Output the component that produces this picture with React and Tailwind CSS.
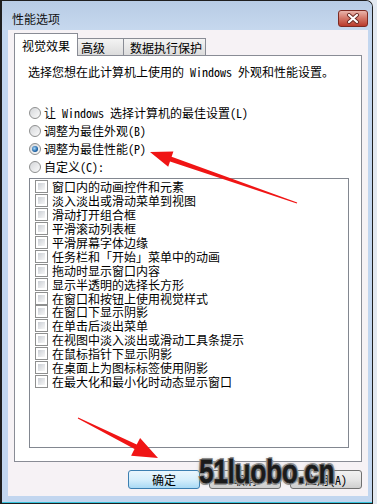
import React from "react";

const options = [
  "窗口内的动画控件和元素",
  "淡入淡出或滑动菜单到视图",
  "滑动打开组合框",
  "平滑滚动列表框",
  "平滑屏幕字体边缘",
  "任务栏和「开始」菜单中的动画",
  "拖动时显示窗口内容",
  "显示半透明的选择长方形",
  "在窗口和按钮上使用视觉样式",
  "在窗口下显示阴影",
  "在单击后淡出菜单",
  "在视图中淡入淡出或滑动工具条提示",
  "在鼠标指针下显示阴影",
  "在桌面上为图标标签使用阴影",
  "在最大化和最小化时动态显示窗口",
];

const radios = [
  { label: "让 Windows 选择计算机的最佳设置(L)" },
  { label: "调整为最佳外观(B)" },
  { label: "调整为最佳性能(P)", checked: true },
  { label: "自定义(C):" },
];

const Radio = ({ label, checked }) => (
  <div className="flex items-center h-[18px] gap-[3px]">
    <div className="ml-[1px] w-[12px] h-[12px] rounded-full border border-[#8e8f8f] bg-linear-to-br from-[#d4d6d9] to-[#fbfbfb] flex items-center justify-center">
      {checked && (
        <div className="w-[6px] h-[6px] rounded-full bg-[radial-gradient(circle_at_40%_40%,#a9d8f8,#1d63a6_60%,#0b3a6e)]" />
      )}
    </div>
    <span className="leading-[14px]">{label}</span>
  </div>
);

const Checkbox = ({ label }) => (
  <div className="flex items-center h-[13.9px] pl-[5px] gap-[4px]">
    <div className="w-[13px] h-[13px] shrink-0 border border-[#8e8f8f] bg-white p-[2px]">
      <div className="w-full h-full bg-linear-to-br from-[#cbcfd5] to-[#f7f7f7]" />
    </div>
    <span className="leading-[13px] whitespace-nowrap">{label}</span>
  </div>
);

const Btn = ({ children, primary }) => (
  <div
    className={
      primary
        ? "w-[72px] h-[19px] rounded-[3px] border border-[#3c7fb1] bg-linear-to-b from-[#eaf6fd] via-[#d6effc] to-[#a9daf5] flex items-center justify-center leading-[14px]"
        : "w-[72px] h-[19px] rounded-[3px] border border-[#707070] bg-linear-to-b from-[#f2f2f2] via-[#e6e6e6] to-[#cfcfcf] flex items-center justify-center leading-[14px]"
    }
  >
    {children}
  </div>
);

const Arrows = () => (
  <svg className="absolute left-0 top-0 pointer-events-none" width="377" height="504" viewBox="0 0 377 504">
    <polygon
      fill="#f01515"
      points="150,152 173.4,151.6 171.6,156.8 297.2,202.5 296.8,203.5 170,161.6 168.2,166.8"
    />
    <polygon
      fill="#f01515"
      points="158,458 140.1,437.9 136.7,444.6 78.2,417.6 77.8,418.4 134.5,449 131.1,455.7"
    />
  </svg>
);

export default function App() {
  return (
    <div className="relative w-[377px] h-[504px] overflow-hidden bg-[#e3e9f1] text-[12px] text-black font-['Noto_Sans_Mono_CJK_SC','Noto_Sans_CJK_SC',sans-serif]">
      <div className="w-[373px] h-[504px] flex flex-col bg-[#c2d6ef] border-l-2 border-t border-r border-[#1f1f1f] rounded-tr-[7px]">
        {/* title bar */}
        <div className="h-[29px] flex items-start justify-between pl-[10px] pr-[4px] bg-linear-to-b from-[#b8cce5] to-[#c6d8ee] rounded-tr-[6px]">
          <span className="mt-[11px] leading-[14px] text-[#111]">性能选项</span>
          <div className="mt-[9px] w-[30px] h-[17px] rounded-[3px] border border-[#7d2a22] bg-linear-to-b from-[#e8b4ac] via-[#d27466] to-[#b9392b] flex items-center justify-center">
            <svg width="14" height="11" viewBox="0 0 14 11">
              <path d="M3 2 L11 9 M11 2 L3 9" stroke="#6b2a24" strokeWidth="4" strokeLinecap="round" />
              <path d="M3 2 L11 9 M11 2 L3 9" stroke="#ffffff" strokeWidth="2.2" strokeLinecap="round" />
            </svg>
          </div>
        </div>

        {/* client area */}
        <div className="h-[466px] ml-[6px] mr-[4px] bg-[#f6f2f5] pl-[6px] flex flex-col">
          {/* tabs */}
          <div className="mt-[3px] h-[22px] flex items-end">
            <div className="relative z-10 -mb-px w-[64px] h-[23px] bg-white border-l border-t border-r border-[#898c95] pl-[7px] pt-[5px] leading-[14px]">
              视觉效果
            </div>
            <div className="w-[46px] h-[17px] bg-linear-to-b from-[#f4f4f4] to-[#dcdcdc] border-t border-r border-[#898c95] pl-[3px] pt-[2px] leading-[14px]">
              高级
            </div>
            <div className="w-[82px] h-[17px] bg-linear-to-b from-[#f4f4f4] to-[#dcdcdc] border-t border-r border-[#898c95] pl-[6px] pt-[2px] leading-[14px]">
              数据执行保护
            </div>
          </div>

          {/* panel */}
          <div className="w-[348px] h-[407px] bg-white border border-[#898c95] pl-[13px] pt-[8px]">
            <div className="h-[16px] leading-[16px] whitespace-nowrap">
              选择您想在此计算机上使用的 Windows 外观和性能设置。
            </div>
            <div className="mt-[24px] flex flex-col">
              {radios.map((r) => (
                <Radio key={r.label} label={r.label} checked={r.checked} />
              ))}
            </div>
            <div className="mt-[2px] ml-[1px] w-[320px] h-[270px] border border-[#828790] bg-white pt-[1px]">
              {options.map((o) => (
                <Checkbox key={o} label={o} />
              ))}
            </div>
          </div>

          {/* buttons */}
          <div className="mt-[8px] w-[348px] flex justify-end gap-[9px]">
            <Btn primary>确定</Btn>
            <Btn>取消</Btn>
            <Btn>应用(A)</Btn>
          </div>
        </div>

        <div className="h-[6px]" />
        <div className="h-px bg-[#37c3dc]" />
        <div className="h-px bg-[#1f1f1f]" />
      </div>

      <Arrows />

      {/* site watermark */}
      <div className="absolute left-[199px] top-[452px] origin-left scale-x-[0.8] whitespace-nowrap font-['Liberation_Sans',sans-serif] font-bold text-[33px] leading-[40px] tracking-[-0.5px] text-[#1a1a1a] [-webkit-text-stroke:0.8px_#1a1a1a] [text-shadow:0_0_1px_#fff,2px_1px_0_#8c8c8c,-2px_-1px_0_#8c8c8c,1px_-2px_0_#8c8c8c,-1px_2px_0_#8c8c8c,0_0_5px_#a0a0a0]">
        51luobo.cn
      </div>
    </div>
  );
}
